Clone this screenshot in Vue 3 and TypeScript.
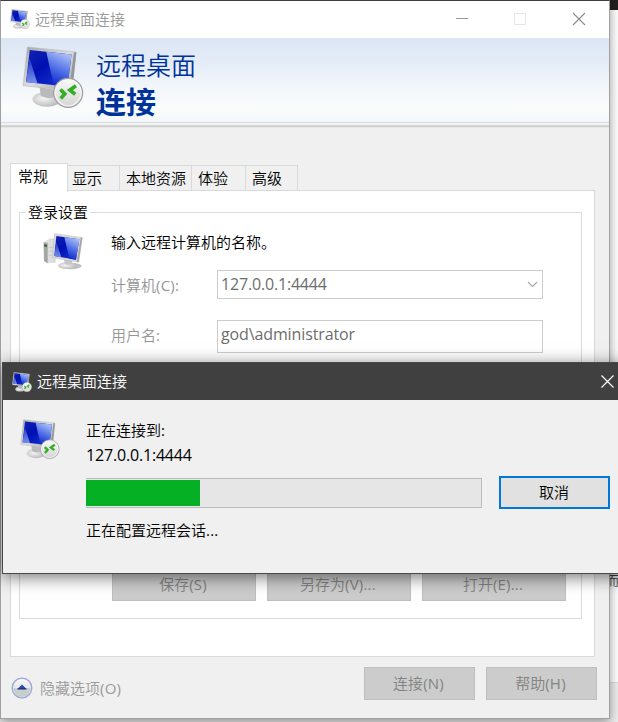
<script setup lang="ts">
import { ref } from 'vue'

const appTitle = '远程桌面连接'
const tabs = [
  { label: '常规', cls: 'w-general' },
  { label: '显示', cls: 'w-display' },
  { label: '本地资源', cls: 'w-local' },
  { label: '体验', cls: 'w-exp' },
  { label: '高级', cls: 'w-adv' },
]
const activeTab = ref(0)
const computer = ref('127.0.0.1:4444')
const userName = ref('god\\administrator')
const progress = ref(28.9)
const fileButtons = [
  { text: '保存', key: '(S)' },
  { text: '另存为', key: '(V)...' },
  { text: '打开', key: '(E)...' },
]
</script>

<template>
  <div class="desktop">
    <svg class="defs" width="0" height="0" aria-hidden="true">
      <defs>
        <linearGradient id="screen" x1="0" y1="0" x2="1" y2="1">
          <stop offset="0" stop-color="#1424b4" />
          <stop offset=".4" stop-color="#0010b0" />
          <stop offset="1" stop-color="#1c3cdc" />
        </linearGradient>
        <linearGradient id="gloss" x1=".75" y1="0" x2=".4" y2="1">
          <stop offset="0" stop-color="#b4c6f8" />
          <stop offset=".5" stop-color="#5474e8" />
          <stop offset="1" stop-color="#0c24cc" />
        </linearGradient>
        <linearGradient id="beam" x1="0" y1="0" x2="0" y2="1">
          <stop offset="0" stop-color="#1c34c8" />
          <stop offset="1" stop-color="#7890ec" />
        </linearGradient>
        <linearGradient id="metal" x1="0" y1="0" x2="1" y2="1">
          <stop offset="0" stop-color="#a4a8ab" />
          <stop offset=".5" stop-color="#dcdcdc" />
          <stop offset="1" stop-color="#a0a0a0" />
        </linearGradient>
        <radialGradient id="foot" cx=".4" cy=".45" r=".6">
          <stop offset="0" stop-color="#f6f6f6" />
          <stop offset="1" stop-color="#b8b9ba" />
        </radialGradient>
        <linearGradient id="badge" x1="0" y1="0" x2="0" y2="1">
          <stop offset="0" stop-color="#fafafa" />
          <stop offset="1" stop-color="#d4d4d4" />
        </linearGradient>
        <symbol id="remote" viewBox="36 20 184 184">
          <ellipse cx="110" cy="178" rx="43" ry="22" fill="url(#foot)" />
          <path d="M88 142 L132 150 L130 172 Q108 178 92 168 Z" fill="#b9babb" />
          <path d="M52 23 L197 38 L184 153 L39 138 Z" fill="url(#metal)" stroke="#b0b3b5" stroke-width="1.5" />
          <path d="M190 39 L197 39 L185 152 L176 151 Z" fill="#94979a" />
          <path d="M59 32 L183 45 L171 141 L48 127 Z" fill="url(#screen)" />
          <path d="M108 37 L183 45 L171 141 L130 136 Z" fill="url(#gloss)" />
          <path d="M58 55 L82 131 L48 127 Z" fill="url(#beam)" />
          <circle cx="173" cy="159" r="43" fill="url(#badge)" stroke="#9fa0a1" stroke-width="3.5" />
          <circle cx="173" cy="159" r="38" fill="none" stroke="#f6f6f6" stroke-width="3" />
          <path d="M150 149 L163 162 L151 176" fill="none" stroke="#35ad26" stroke-width="11" />
          <path d="M196 138 L178 151 L194 163" fill="none" stroke="#35ad26" stroke-width="11" />
        </symbol>
        <symbol id="pc" viewBox="20 24 120 112">
          <path d="M22 51 L42 39 L62 41 L58 112 L33 114 L23 107 Z" fill="#dedede" />
          <path d="M22 51 L34 53 L34 114 L23 107 Z" fill="#a3a5a6" />
          <path d="M24 57 L32 59 L32 66 L24 64 Z" fill="#3c423b" />
          <circle cx="28" cy="66" r="3" fill="#68d820" />
          <path d="M37 66 H50 M37 78 H50 M37 90 H50" stroke="#bdbdbd" stroke-width="2" />
          <ellipse cx="102" cy="122" rx="34" ry="10" fill="#c0c0c0" />
          <ellipse cx="93" cy="121" rx="28" ry="10" fill="url(#foot)" />
          <path d="M83 99 L109 103 L105 117 Q94 121 85 115 Z" fill="#c6c7c8" />
          <path d="M55 25 L138 37 L127 110 L48 97 Z" fill="#dcddde" stroke="#b0b2b3" stroke-width="1.5" />
          <path d="M133 37 L138 37 L127 110 L121 109 Z" fill="#a8a8a8" />
          <path d="M60 32 L129 42 L119 103 L54 92 Z" fill="url(#screen)" />
          <path d="M84 36 L129 42 L119 103 L99 100 Z" fill="url(#gloss)" />
          <path d="M60 50 L75 96 L54 92 Z" fill="url(#beam)" />
        </symbol>
      </defs>
    </svg>

    <div class="backdrop">
      <div class="back-top"></div>
      <div class="back-page"><span>而</span></div>
      <div class="back-foot"></div>
    </div>

    <section class="window main">
      <header class="titlebar">
        <svg class="ico-s"><use href="#remote" /></svg>
        <span class="caption">{{ appTitle }}</span>
        <svg class="sys" width="130" height="14" viewBox="0 0 130 14" fill="none">
          <path d="M0 6.5H12" stroke="#999" />
          <rect x="58.5" y="1.5" width="11" height="11" stroke="#e6e6e6" />
          <path d="M117 1L129 13M129 1L117 13" stroke="#8c8c8c" stroke-width="1.1" />
        </svg>
      </header>

      <div class="banner">
        <svg class="ico-l"><use href="#remote" /></svg>
        <h1><span>远程桌面</span><b>连接</b></h1>
      </div>
      <div class="rule"></div>

      <nav class="tabs">
        <button
          v-for="(tab, i) in tabs"
          :key="tab.label"
          :class="['tab', tab.cls, { active: i === activeTab }]"
          @click="activeTab = i"
        >{{ tab.label }}</button>
      </nav>

      <div class="panel">
        <div class="group">
          <span class="legend">登录设置</span>
          <div class="login">
            <svg class="ico-pc"><use href="#pc" /></svg>
            <div class="form">
              <p>输入远程计算机的名称。</p>
              <label>计算机<i>(C):</i></label>
              <div class="field combo">
                <span>{{ computer }}</span>
                <svg width="11" height="7" viewBox="0 0 11 7"><path d="M1 1L5.5 5.5L10 1" fill="none" stroke="#a6a6a6" stroke-width="1.1" /></svg>
              </div>
              <label>用户名<i>:</i></label>
              <div class="field user"><span>{{ userName }}</span></div>
            </div>
          </div>
          <div class="files">
            <button v-for="b in fileButtons" :key="b.key" class="btn">{{ b.text }}<i>{{ b.key }}</i></button>
          </div>
        </div>
      </div>

      <footer class="foot">
        <svg class="toggle" width="22" height="22" viewBox="0 0 22 22">
          <circle cx="11" cy="11" r="9.8" fill="url(#badge)" stroke="#9aa6d6" stroke-width="1.3" />
          <path d="M2.5 11a8.5 8.5 0 0 0 17 0Z" fill="#c0c8c4" opacity=".75" />
          <path d="M6.5 12L11 7.5L15.5 12Z" fill="#2448b0" /><path d="M6.5 12H15.5" stroke="#15266c" />
        </svg>
        <span class="hide">隐藏选项<i>(O)</i></span>
        <button class="btn">连接<i>(N)</i></button>
        <button class="btn">帮助<i>(H)</i></button>
      </footer>
    </section>

    <section class="window dialog">
      <header class="titlebar dark">
        <svg class="ico-s"><use href="#remote" /></svg>
        <span class="caption">{{ appTitle }}</span>
        <svg class="close" width="13" height="13" viewBox="0 0 13 13"><path d="M.5 .5L12.5 12.5M12.5 .5L.5 12.5" stroke="#fff" stroke-width="1.2" /></svg>
      </header>
      <div class="status">
        <svg class="ico-m"><use href="#remote" /></svg>
        <div class="info">
          <p>正在连接到<i>:</i></p>
          <p class="num">{{ computer }}</p>
          <div class="progress"><div class="fill" :style="{ width: progress + '%' }"></div></div>
          <p class="stage">正在配置远程会话<i>...</i></p>
        </div>
        <button class="cancel">取消</button>
      </div>
    </section>
  </div>
</template>

<style>
body { overflow: hidden; }
</style>

<style scoped>
* { box-sizing: border-box; margin: 0; }
.desktop {
  position: relative; width: 618px; height: 722px; overflow: hidden; background: #d4d4d4;
  font: 350 15px/20px "Noto Sans CJK SC", sans-serif; color: #000;
}
.defs { position: absolute; }
svg { flex: none; display: block; }
i { font: 15px/20px "Open Sans", sans-serif; letter-spacing: 0.2px; }
button { font: inherit; color: inherit; padding: 0; border-radius: 0; white-space: nowrap; }
.ico-s { width: 20px; height: 20px; }
.ico-m { width: 40px; height: 40px; }
.ico-l { width: 62px; height: 62px; }
.ico-pc { width: 40px; height: 38px; }

.backdrop { height: 722px; display: flex; flex-direction: column; }
.back-top { height: 10px; background: #22211f; }
.back-page { height: 672px; padding: 560px 0 0 606px; background: #fff; font-size: 13px; color: #444; overflow: hidden; white-space: nowrap; line-height: 20px; }
.back-foot { flex: 1; background: #ededed; border-top: 1px solid #dcdcdc; }

.window { position: absolute; display: flex; flex-direction: column; background: #f0f0f0; }
.main { left: 0; top: 0; width: 610px; height: 719px; border: 1px solid #a0a0a0; border-top-color: #403d3e; box-shadow: 0 3px 10px rgba(0, 0, 0, .4); }
.titlebar { height: 37px; flex: none; display: flex; align-items: center; background: #fff; padding: 0 23px 0 9px; color: #999; }
.titlebar .ico-s { margin-top: -2px; }
.caption { flex: 1; margin: -2px 0 0 5px; }
.main .titlebar .sys { margin-top: -2px; }

.banner { height: 84px; flex: none; display: flex; padding: 8px 0 0 21px; background: linear-gradient(#dbe6f4, #e5ecf7 30%, #f3f7fb 60%, #fafdfc 85%, #f2f7fb); }
h1 { display: flex; flex-direction: column; margin: -1px 0 0 12px; font-weight: 350; color: #003399; font-size: 25px; line-height: 38px; }
h1 b { font-size: 30px; line-height: 35px; }
.rule { height: 6px; flex: none; background: linear-gradient(#d9dcde 1px, #f3f3f3 1px 3px, #d2d2d2 3px 5px, #e5e5e5 5px); }

.tabs { display: flex; align-items: flex-end; height: 63px; padding-left: 9px; flex: none; }
.tab { height: 26px; border: 1px solid #d9d9d9; border-left: 0; border-bottom: 0; background: #f0f0f0; text-align: left; padding: 0 0 2px 5px; }
.tab.active { height: 29px; background: #fff; border-left: 1px solid #d9d9d9; margin-bottom: -1px; position: relative; z-index: 1; padding: 0 0 5px 7px; }
.w-general { width: 58px; }
.w-display { width: 52px; padding-left: 4px; }
.w-local { width: 72px; padding-left: 6px; }
.w-exp { width: 54px; padding-left: 6px; }
.w-adv { width: 52px; padding-left: 6px; }

.panel { margin: -1px 14px 0 9px; height: 467px; flex: none; background: #fff; border: 1px solid #d9d9d9; padding: 21px 12px 0 8px; }
.group { height: 407px; border: 1px solid #dcdcdc; display: flex; flex-direction: column; }
.legend { align-self: flex-start; height: 20px; margin: -11px 0 0 6px; padding: 0 2px; background: #fff; }
.login { display: flex; padding: 10px 0 0 23px; }
.ico-pc { margin-top: 1px; }
.form { display: grid; grid-template-columns: 106px 326px; grid-template-rows: 38px 50px 33px; margin-left: 28px; }
.form p { grid-column: 1 / 3; }
label { color: #969696; line-height: 30px; }
.field { border: 1px solid #ccc; height: 29px; font: 16px/26px "Open Sans", sans-serif; letter-spacing: -0.18px; color: #6d6d6d; padding: 0 4px 0 3px; }
.combo { display: flex; justify-content: space-between; align-items: center; }
.combo span { margin-top: -1px; }
.user { height: 33px; letter-spacing: -0.12px; }
.files { display: flex; gap: 11px; margin: auto 0 17px 92px; }
.btn { display: flex; align-items: center; justify-content: center; border: 1px solid #bfbfbf; background: #ccc; color: #838383; padding: 0 2px 1px 0; }
.files .btn { width: 144px; height: 33px; }

.foot { display: flex; align-items: center; padding: 10px 12px 0 10px; }
.hide { flex: 1; margin-left: 7px; color: #999; }
.toggle, .hide { margin-top: 9px; }
.foot .btn { width: 111px; height: 33px; margin-left: 11px; }

.dialog { left: 2px; top: 362px; width: 626px; height: 212px; border: 1px solid #484a49; box-shadow: 0 3px 16px rgba(0, 0, 0, .55); }
.dark { background: #404040; color: #fff; padding: 0 13px 0 9px; }
.dark .ico-s { margin-top: 0; }
.status { display: flex; align-items: flex-start; padding: 19px 0 0 17px; }
.info { width: 396px; margin-left: 26px; padding-top: 1px; }
.num { font: 16px/20px "Open Sans", sans-serif; letter-spacing: -0.18px; margin-top: 5px; }
.progress { height: 30px; margin-top: 13px; border: 1px solid #bcbcbc; border-left: 0; padding: 1px 0; background: #e6e6e6; }
.fill { height: 26px; background: #06b025; }
.stage { margin-top: 12px; }
.cancel { width: 111px; height: 33px; margin: 57px 0 0 17px; padding: 0 1px 2px 0; border: 2px solid #0078d7; background: #e1e1e1; }
</style>
